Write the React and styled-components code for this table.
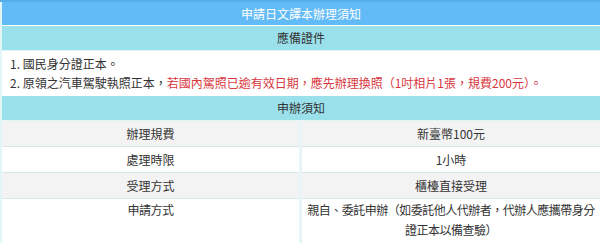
import React from 'react';
import styled, { createGlobalStyle } from 'styled-components';

const GlobalStyle = createGlobalStyle`
  html, body {
    margin:0;
    padding:0;
    background:#fff;
  }
  body {
    font-family:"Noto Sans CJK TC","Noto Sans",sans-serif;
    color:#333;
    font-size:12px;
  }
`;

const Table = styled.table`
  width:600px;
  border-collapse:collapse;
  table-layout:fixed;
  border-left:2px solid #e2f6f6;
`;

const TitleCell = styled.th`
  padding:0;
  line-height:23px;
  background:#62bbf6;
  border-top:2px solid #55aee8;
  border-bottom:1px solid #fff;
  color:#fff;
  font-weight:400;
  font-size:12px;
  text-align:center;
`;

const SectionCell = styled.th`
  padding:0;
  line-height:24px;
  background:#9be1ec;
  border-bottom:1px solid #e6f3f5;
  color:#333;
  font-weight:400;
  font-size:12px;
  text-align:center;
`;

const ListCell = styled.td`
  padding:3px 8px 4px;
  line-height:19px;
  font-size:12px;
  text-align:left;
`;

const ListLine = styled.div`
  white-space:nowrap;
`;

const Warn = styled.span`
  color:#d9363e;
`;

const Cell = styled.td`
  padding:${p => (p.$tall ? '1px 3px 3px' : '0 6px')};
  vertical-align:${p => (p.$tall ? 'top' : 'middle')};
  background:${p => (p.$shade ? '#f3f3f3' : '#fff')};
  border-bottom:1px solid #d6e8e8;
  border-right:${p => (p.$left ? '3px solid #e6f6f6' : 'none')};
  text-align:center;
  line-height:${p => (p.$tall ? '20px' : '25px')};
  letter-spacing:${p => (p.$tall ? '-0.5px' : '0')};
  font-size:12px;
`;

const rows = [
  ['辦理規費', '新臺幣100元'],
  ['處理時限', '1小時'],
  ['受理方式', '櫃檯直接受理'],
  ['申請方式', '親自、委託申辦（如委託他人代辦者，代辦人應攜帶身分證正本以備查驗）'],
];

export default function App() {
  return (
    <>
      <GlobalStyle />
      <Table>
        <colgroup>
          <col style={{ width: '50%' }} />
          <col style={{ width: '50%' }} />
        </colgroup>
        <tbody>
          <tr>
            <TitleCell colSpan={2}>申請日文譯本辦理須知</TitleCell>
          </tr>
          <tr>
            <SectionCell colSpan={2}>應備證件</SectionCell>
          </tr>
          <tr>
            <ListCell colSpan={2}>
              <ListLine>1. 國民身分證正本。</ListLine>
              <ListLine>
                2. 原領之汽車駕駛執照正本，
                <Warn>若國內駕照已逾有效日期，應先辦理換照（1吋相片1張，規費200元）。</Warn>
              </ListLine>
            </ListCell>
          </tr>
          <tr>
            <SectionCell colSpan={2}>申辦須知</SectionCell>
          </tr>
          {rows.map(([k, v], i) => (
            <tr key={k}>
              <Cell $left $shade={i % 2 === 0} $tall={i === 3}>{k}</Cell>
              <Cell $shade={i % 2 === 0} $tall={i === 3}>{v}</Cell>
            </tr>
          ))}
        </tbody>
      </Table>
    </>
  );
}
